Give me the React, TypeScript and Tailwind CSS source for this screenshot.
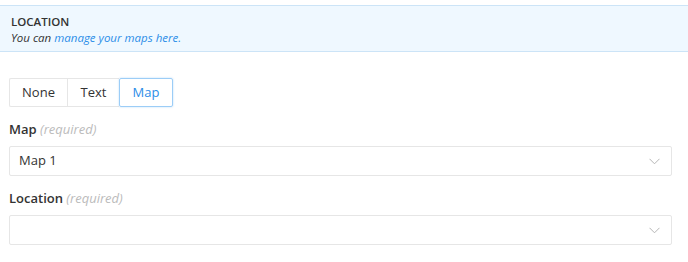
import React from 'react';

function Chevron() {
  return (
    <svg width="11" height="7" viewBox="0 0 11 7" className="shrink-0">
      <path d="M0.5 0.8 L5.5 5.8 L10.5 0.8" fill="none" stroke="#b5b5b5" strokeWidth="1" />
    </svg>
  );
}

function Select({ value }: { value?: string }) {
  return (
    <div className="flex h-[30px] items-center justify-between rounded-[2px] border border-[#e6e6e6] bg-white pl-[9px] pr-[11px] text-[13px] text-[#333]">
      <span>{value}</span>
      <Chevron />
    </div>
  );
}

function Label({ text }: { text: string }) {
  return (
    <div className="text-[13px] leading-[18px]">
      <span className="font-semibold text-[#333]">{text}</span>{' '}
      <span className="italic text-[#bbb]">(required)</span>
    </div>
  );
}

export default function App() {
  const options = ['None', 'Text', 'Map'];
  const selected = 'Map';

  return (
    <div className="h-[262px] w-[688px] bg-white pt-[5px] font-['Open_Sans',sans-serif] text-[#333]">
      <div className="h-[47px] border-y border-[#cce4f7] bg-[#eff8ff] px-[11px] pt-[8px]">
        <div className="text-[11.5px] font-semibold leading-[16px]">LOCATION</div>
        <div className="text-[11.5px] italic leading-[16px]">
          You can <a className="text-[#2b8de8]">manage your maps here.</a>
        </div>
      </div>

      <div className="px-[9px]">
        <div className="mt-[26px] flex h-[29px] text-[13px]">
          {options.map(o =>
            o === selected ? (
              <div
                key={o}
                className="flex w-[54px] items-center justify-center rounded-[2px] border border-[#9ccdf7] text-[#2b8de8] shadow-[0_0_2px_rgba(43,141,232,0.35)]"
              >
                {o}
              </div>
            ) : (
              <div
                key={o}
                className={`flex items-center justify-center border border-[#e6e6e6] border-r-0 ${o === 'None' ? 'w-[58px] rounded-l-[2px]' : 'w-[52px]'}`}
              >
                {o}
              </div>
            )
          )}
        </div>

        <div className="mt-[13px] mb-[8px]">
          <Label text="Map" />
        </div>
        <div className="pr-[7px]">
          <Select value="Map 1" />
        </div>

        <div className="mt-[13px] mb-[8px]">
          <Label text="Location" />
        </div>
        <div className="pr-[7px]">
          <Select />
        </div>
      </div>
    </div>
  );
}
